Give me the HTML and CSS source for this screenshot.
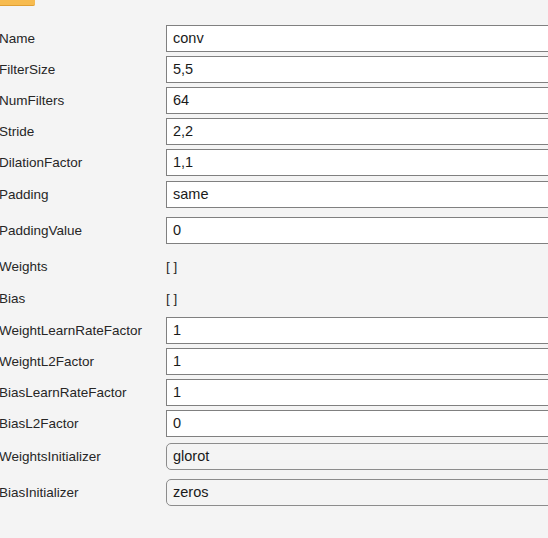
FILE: index.html
```html
<!DOCTYPE html>
<html>
<head>
<meta charset="utf-8">
<link rel="stylesheet" href="styles.css">
</head>
<body>
<div class="page">
  <div class="topbtn"></div>
  <div class="form">
    <div class="row r-first"><span class="label">Name</span><div class="field">conv</div></div>
    <div class="row"><span class="label">FilterSize</span><div class="field">5,5</div></div>
    <div class="row"><span class="label">NumFilters</span><div class="field">64</div></div>
    <div class="row"><span class="label">Stride</span><div class="field">2,2</div></div>
    <div class="row"><span class="label">DilationFactor</span><div class="field">1,1</div></div>
    <div class="row r-5"><span class="label">Padding</span><div class="field">same</div></div>
    <div class="row r-9"><span class="label">PaddingValue</span><div class="field">0</div></div>
    <div class="row r-9"><span class="label">Weights</span><div class="static">[ ]</div></div>
    <div class="row r-5"><span class="label">Bias</span><div class="static">[ ]</div></div>
    <div class="row r-5"><span class="label">WeightLearnRateFactor</span><div class="field">1</div></div>
    <div class="row"><span class="label">WeightL2Factor</span><div class="field">1</div></div>
    <div class="row"><span class="label">BiasLearnRateFactor</span><div class="field">1</div></div>
    <div class="row"><span class="label">BiasL2Factor</span><div class="field">0</div></div>
    <div class="row r-6"><span class="label">WeightsInitializer</span><div class="field dropdown">glorot</div></div>
    <div class="row r-9"><span class="label">BiasInitializer</span><div class="field dropdown">zeros</div></div>
  </div>
</div>
</body>
</html>
```

FILE: styles.css
```css
html, body {
  margin: 0;
  padding: 0;
  background: #f4f4f4;
  overflow: hidden;
}
body {
  width: 548px;
  height: 538px;
  font-family: "Liberation Sans", Arial, sans-serif;
  color: #212121;
}
.page {
  position: relative;
  width: 548px;
  height: 538px;
  overflow: hidden;
}
.topbtn {
  position: absolute;
  left: 0;
  top: 0;
  width: 35px;
  height: 5px;
  background: #f7bb4f;
  border-bottom: 1px solid #e09f32;
  border-radius: 0 0 2px 0;
}
.form {
  display: flex;
  flex-direction: column;
  margin-left: -1px;
  padding-top: 25px;
}
.row {
  display: grid;
  grid-template-columns: 167px 400px;
  align-items: center;
  height: 27px;
  margin-top: 4px;
}
.row.r-first { margin-top: 0; }
.row.r-5 { margin-top: 5px; }
.row.r-6 { margin-top: 6px; }
.row.r-9 { margin-top: 9px; }
.label {
  font-size: 13.5px;
  color: #262626;
  white-space: nowrap;
}
.field {
  box-sizing: border-box;
  height: 27px;
  border: 1px solid #808080;
  background: #ffffff;
  font-size: 14.5px;
  line-height: 25px;
  padding-left: 6px;
  color: #1a1a1a;
}
.field.dropdown {
  background: #f4f4f4;
  border-color: #8c8c8c;
  border-radius: 5px;
}
.static {
  font-size: 13.5px;
  padding-left: 0;
  color: #262626;
}
```
